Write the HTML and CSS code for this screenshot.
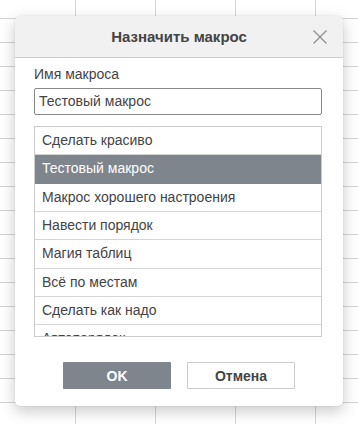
FILE: index.html
```html
<!DOCTYPE html>
<html lang="ru">
<head>
<meta charset="utf-8">
<link rel="stylesheet" href="styles.css">
</head>
<body>
<div class="sheet">
  <div class="dialog">
    <div class="header">
      <span class="title">Назначить макрос</span>
      <svg class="close" width="14" height="14" viewBox="0 0 14 14"><path d="M0.5 0.5 L13.5 13.5 M13.5 0.5 L0.5 13.5" stroke="#8a8a8a" stroke-width="1.1" fill="none"/></svg>
    </div>
    <div class="body">
      <label class="label">Имя макроса</label>
      <div class="input">Тестовый макрос</div>
      <ul class="list">
        <li class="item">Сделать красиво</li>
        <li class="item selected">Тестовый макрос</li>
        <li class="item">Макрос хорошего настроения</li>
        <li class="item">Навести порядок</li>
        <li class="item">Магия таблиц</li>
        <li class="item">Всё по местам</li>
        <li class="item">Сделать как надо</li>
        <li class="item">Автопорядок</li>
      </ul>
    </div>
    <div class="footer">
      <button class="btn primary">OK</button>
      <button class="btn secondary">Отмена</button>
    </div>
  </div>
</div>
</body>
</html>
```

FILE: styles.css
```css
html, body {
  margin: 0;
  padding: 0;
}
body {
  width: 358px;
  height: 424px;
  overflow: hidden;
  font-family: "Liberation Sans", Arial, sans-serif;
}
.sheet {
  position: relative;
  width: 358px;
  height: 424px;
  background-color: #fff;
  background-image:
    linear-gradient(to right, #d4d4d4 1px, transparent 1px),
    linear-gradient(to bottom, #d4d4d4 1px, transparent 1px);
  background-size: 80px 24px;
  background-position: 75px 18px;
}
.dialog {
  position: absolute;
  left: 15px;
  top: 16px;
  width: 328px;
  height: 390px;
  background: #fff;
  border-radius: 5px;
  box-shadow: 0 5px 15px rgba(0,0,0,0.22), 0 0 1px rgba(0,0,0,0.25);
  display: flex;
  flex-direction: column;
  overflow: hidden;
}
.header {
  height: 41px;
  background: #f1f1f1;
  border-bottom: 1px solid #cbcbcb;
  display: flex;
  align-items: center;
  justify-content: center;
  position: relative;
}
.title {
  font-weight: bold;
  font-size: 15px;
  color: #444;
}
.close {
  position: absolute;
  right: 16px;
  top: 14px;
}
.body {
  padding: 8px 21px 0 19px;
  display: flex;
  flex-direction: column;
}
.label {
  font-size: 14px;
  line-height: 16px;
  color: #444;
  margin-bottom: 6px;
}
.input {
  height: 25px;
  border: 1px solid #888;
  border-radius: 2px;
  font-size: 14px;
  line-height: 25px;
  padding-left: 4px;
  color: #444;
}
.list {
  list-style: none;
  margin: 11px 0 0 0;
  padding: 0;
  height: 209px;
  border: 1px solid #cbcbcb;
  overflow: hidden;
}
.item {
  height: 27.33px;
  line-height: 27px;
  border-bottom: 1px solid #d4d4d4;
  padding-left: 7px;
  font-size: 14px;
  color: #444;
  white-space: nowrap;
}
.item.selected {
  background: #7e858c;
  color: #fff;
  border-bottom-color: #7e858c;
}
.footer {
  margin-top: auto;
  padding-bottom: 17px;
  display: flex;
  justify-content: center;
  gap: 16px;
}
.btn {
  width: 108px;
  height: 27px;
  font-family: "Liberation Sans", Arial, sans-serif;
  font-weight: bold;
  font-size: 14px;
  border-radius: 1px;
  padding: 0;
}
.primary {
  background: #7e858c;
  color: #fff;
  border: none;
}
.secondary {
  background: #fff;
  color: #444;
  border: 1px solid #cbcbcb;
}
```
